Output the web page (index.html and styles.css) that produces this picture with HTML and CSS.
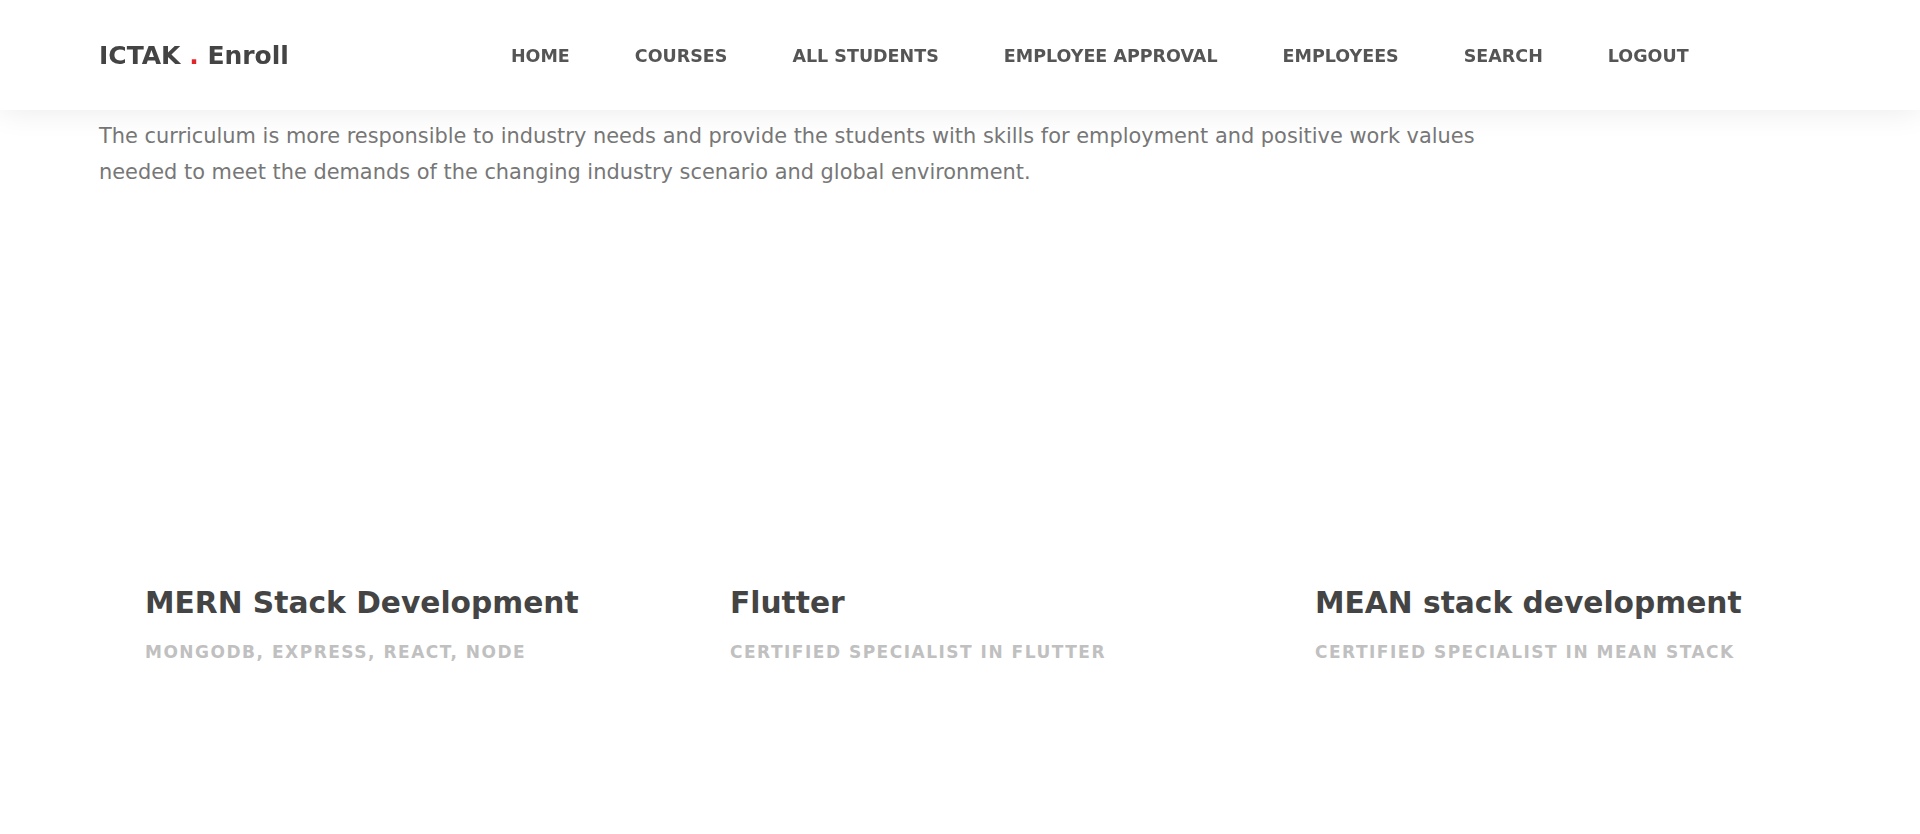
FILE: index.html
```html
<!DOCTYPE html>
<html lang="en">
<head>
<meta charset="utf-8">
<title>ICTAK . Enroll</title>
<link rel="stylesheet" href="styles.css">
</head>
<body>
<header class="topbar">
  <a class="brand" href="#">ICTAK <span class="brand-dot">.</span> Enroll</a>
  <nav class="menu">
    <a class="menu-link" href="#">HOME</a>
    <a class="menu-link" href="#">COURSES</a>
    <a class="menu-link" href="#">ALL STUDENTS</a>
    <a class="menu-link" href="#">EMPLOYEE APPROVAL</a>
    <a class="menu-link" href="#">EMPLOYEES</a>
    <a class="menu-link" href="#">SEARCH</a>
    <a class="menu-link" href="#">LOGOUT</a>
  </nav>
</header>
<main class="page">
  <p class="intro">The curriculum is more responsible to industry needs and provide the students with skills for employment and positive work values<br>needed to meet the demands of the changing industry scenario and global environment.</p>
  <section class="courses">
    <div class="course">
      <h3 class="course-title">MERN Stack Development</h3>
      <p class="course-sub">MONGODB, EXPRESS, REACT, NODE</p>
    </div>
    <div class="course">
      <h3 class="course-title">Flutter</h3>
      <p class="course-sub">CERTIFIED SPECIALIST IN FLUTTER</p>
    </div>
    <div class="course">
      <h3 class="course-title">MEAN stack development</h3>
      <p class="course-sub">CERTIFIED SPECIALIST IN MEAN STACK</p>
    </div>
  </section>
</main>
</body>
</html>
```
FILE: styles.css
```css
* { box-sizing: border-box; }
html, body { margin: 0; padding: 0; }
body {
  background: #ffffff;
  font-family: "DejaVu Sans", "Noto Sans", sans-serif;
  color: #444;
}
.topbar {
  position: fixed;
  top: 0; left: 0; right: 0;
  height: 110px;
  background: #fff;
  display: flex;
  align-items: center;
  padding-left: 99px;
  box-shadow: 0 0 30px rgba(0,0,0,0.09);
  z-index: 10;
}
.brand {
  font-size: 25px;
  font-weight: 700;
  color: #444;
  text-decoration: none;
}
.brand-dot { color: #e0262b; }
.menu {
  display: flex;
  gap: 65px;
  margin-left: 222px;
  padding-top: 2px;
}
.menu-link {
  font-size: 17.5px;
  font-weight: 700;
  color: #555;
  text-decoration: none;
}
.page {
  padding-top: 110px;
}
.intro {
  margin: 9px 0 0 99px;
  font-size: 20.9px;
  line-height: 35.5px;
  color: #777;
}
.courses {
  display: grid;
  grid-template-columns: repeat(3, 585px);
  padding-left: 145px;
  margin-top: 395px;
}
.course-title {
  margin: 0;
  font-size: 29.7px;
  font-weight: 700;
  color: #444;
  line-height: 36px;
}
.course-sub {
  margin: 21px 0 0;
  font-size: 17px;
  font-weight: 700;
  letter-spacing: 1.5px;
  color: #c0c0c0;
}
```
